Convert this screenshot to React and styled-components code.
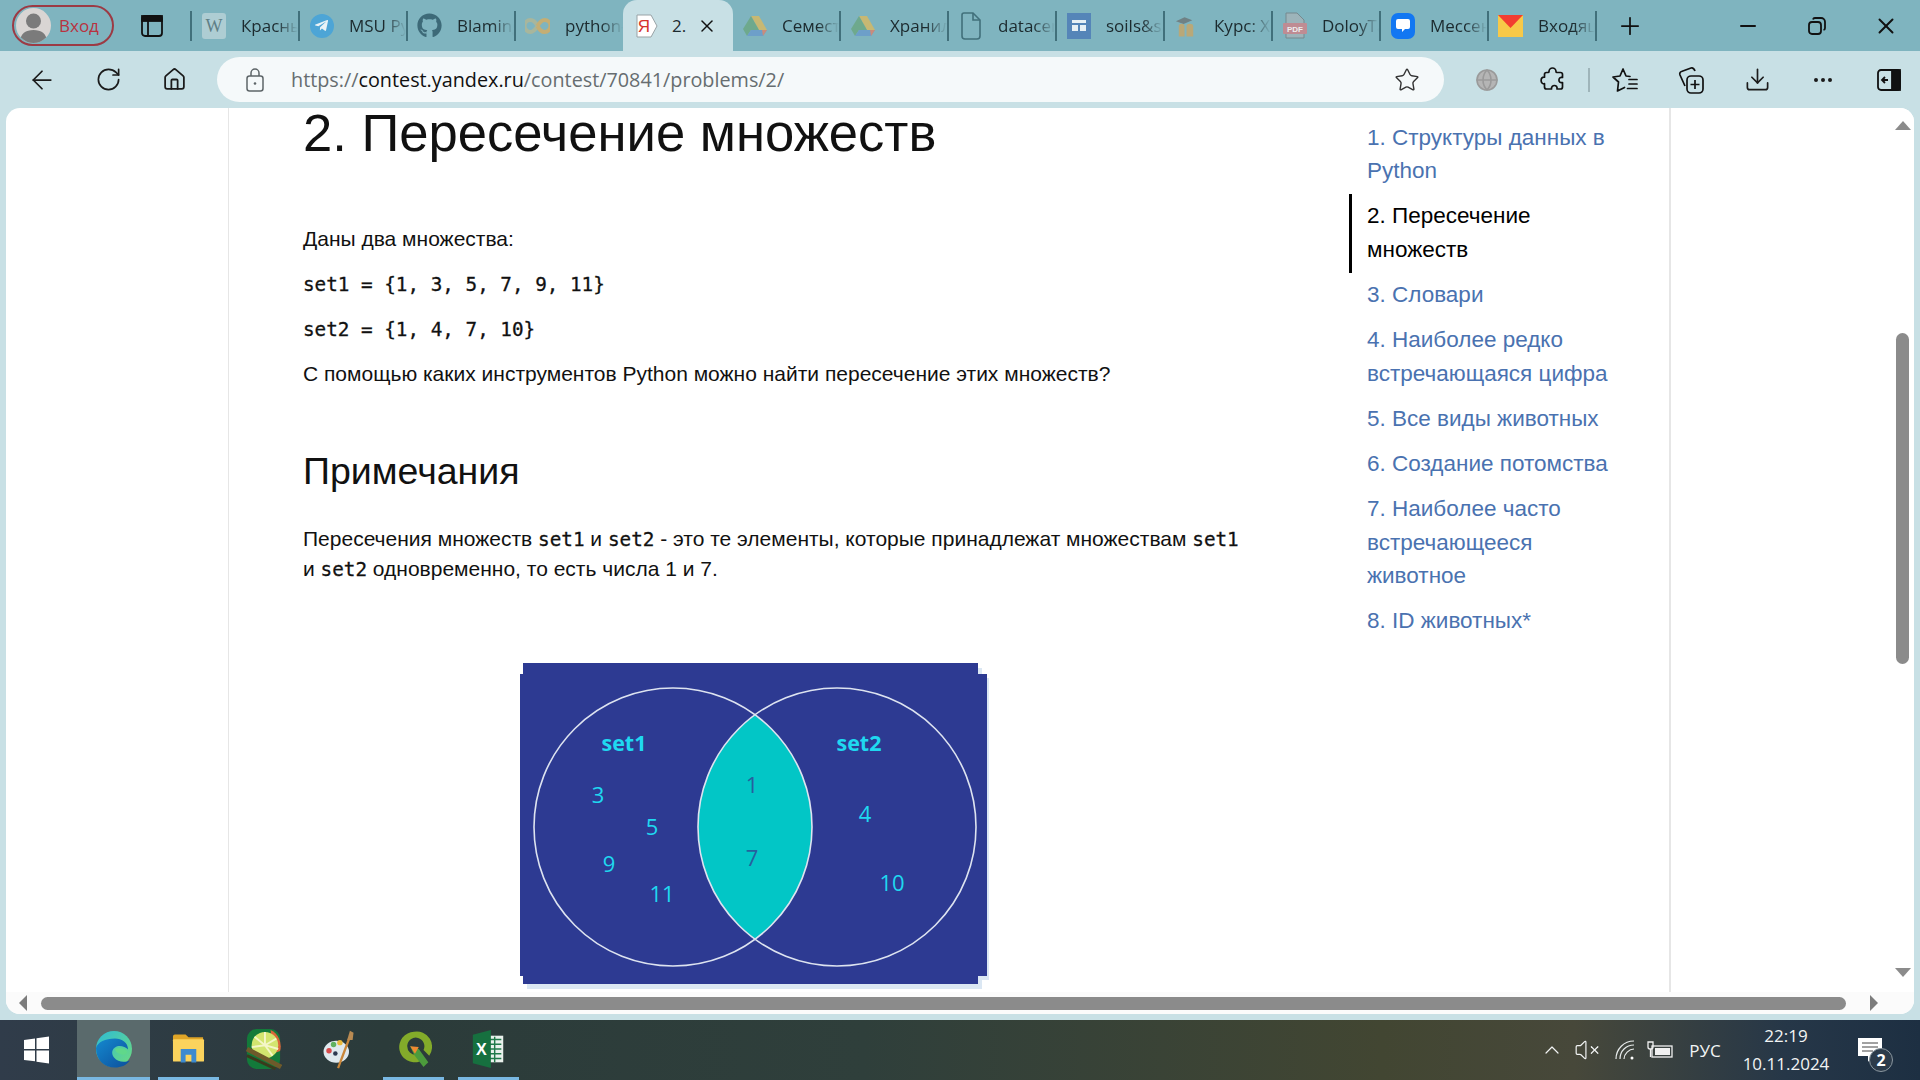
import React from 'react'
import styled, { createGlobalStyle } from 'styled-components'
import { ArrowLeft, RotateCw, Home, Star, Download, MoreHorizontal, Plus, X, Minus, ChevronUp, VolumeX, Globe } from 'lucide-react'
import { FaGithub, FaTelegramPlane } from 'react-icons/fa'

const Global = createGlobalStyle`
  html, body { margin: 0; padding: 0; background: #c8e0e5; }
  body { font-family: "Liberation Sans", Arial, sans-serif; }
  * { box-sizing: border-box; }
`

const Screen = styled.div`
  width: 1920px;
  height: 1080px;
  display: flex;
  flex-direction: column;
  overflow: hidden;
  background: #c8e0e5;
`

/* ---- tab strip ---- */
const TabStrip = styled.div`
  height: 51px;
  flex: none;
  display: flex;
  align-items: center;
  background: #7fb4bf;
  padding-left: 12px;
`
const Profile = styled.div`
  width: 102px;
  height: 41px;
  flex: none;
  display: flex;
  align-items: center;
  gap: 8px;
  padding-left: 2px;
  border: 2px solid #9c3a44;
  border-radius: 21px;
  color: #b8323f;
  font: 17px "Open Sans", sans-serif;
`
const Avatar = styled.div`
  width: 35px;
  height: 35px;
  flex: none;
  border-radius: 50%;
  overflow: hidden;
`
const StripButton = styled.div`
  width: ${p => p.$w}px;
  flex: none;
  display: flex;
  align-items: center;
  justify-content: center;
  color: #111;
`
const Tab = styled.div`
  width: ${p => p.$w || 108}px;
  height: ${p => (p.$active ? 51 : 30)}px;
  flex: none;
  display: flex;
  align-items: center;
  padding-left: ${p => (p.$active ? 11 : 9)}px;
  border-right: ${p => (p.$active || p.$plain ? 'none' : '2px solid #41707b')};
  background: ${p => (p.$active ? '#c8e0e5' : 'transparent')};
  border-radius: ${p => (p.$active ? '14px 14px 0 0' : '0')};
`
const TabIcon = styled.div`
  width: 25px;
  height: 25px;
  flex: none;
  display: flex;
  align-items: center;
  justify-content: center;
`
const TabLabel = styled.span`
  margin-left: ${p => p.$gap || 15}px;
  width: ${p => p.$w || 58}px;
  overflow: hidden;
  white-space: nowrap;
  color: #1c2a2e;
  font: 17px "Open Sans", sans-serif;
  mask-image: ${p => (p.$solid ? 'none' : 'linear-gradient(to right, #000 62%, transparent 100%)')};
`
const FirstSep = styled.div`
  width: 2px;
  height: 30px;
  flex: none;
  background: #41707b;
`
const Spacer = styled.div`
  flex: 1;
`
const WinButton = styled.div`
  width: 69px;
  flex: none;
  display: flex;
  justify-content: center;
  color: #111;
`

/* ---- toolbar ---- */
const Toolbar = styled.div`
  height: 57px;
  flex: none;
  display: flex;
  align-items: center;
  padding-left: 9px;
`
const ToolSlot = styled.div`
  width: 66px;
  height: 45px;
  flex: none;
  display: flex;
  align-items: center;
  justify-content: center;
  color: #1b1b1b;
`
const ToolSep = styled.div`
  width: 6px;
  flex: none;
  display: flex;
  justify-content: center;
  &::before { content: ''; width: 2px; height: 24px; background: #9fb5ba; }
`
const Address = styled.div`
  width: 1227px;
  height: 45px;
  flex: none;
  margin: 0 10px;
  display: flex;
  align-items: center;
  padding: 0 24px 0 29px;
  border-radius: 23px;
  background: #f5f9fa;
  color: #5d6568;
`
const Url = styled.div`
  margin-left: 27px;
  flex: 1;
  font: 19.8px "Open Sans", sans-serif;
  color: #666d70;
  b { font-weight: 400; color: #111; }
`

/* ---- page viewport ---- */
const Viewport = styled.div`
  width: 1908px;
  height: 906px;
  flex: none;
  margin-left: 6px;
  display: grid;
  grid-template-columns: 1fr 21px;
  grid-template-rows: 1fr 22px;
  border-radius: 14px;
  overflow: hidden;
  background: #fff;
`
const SheetArea = styled.div`
  overflow: hidden;
  padding-left: 222px;
`
const Sheet = styled.div`
  width: 1443px;
  height: 100%;
  display: flex;
  border-left: 1px solid #e6e6e6;
  border-right: 2px solid #e6e6e6;
`
const Article = styled.article`
  width: 1120px;
  flex: none;
  padding: 0 100px 0 74px;
  color: #111;
  font-size: 21px;
`
const Title = styled.h1`
  margin: 0 0 66px;
  font-size: 52.6px;
  line-height: 50px;
  font-weight: 400;
  color: #111;
`
const Para = styled.p`
  margin: 0 0 15px;
  line-height: 30px;
`
const Code = styled.code`
  font: 19.3px "DejaVu Sans Mono", monospace;
  -webkit-text-stroke: 0.3px #111;
`
const SubTitle = styled.h2`
  margin: 60px 0 31px;
  font-size: 37.5px;
  line-height: 44px;
  font-weight: 400;
`
const Figure = styled.div`
  margin: 74px 0 0 212px;
`
const NavList = styled.nav`
  width: 275px;
  flex: none;
  padding-top: 7px;
  display: flex;
  flex-direction: column;
`
const NavItem = styled.div`
  padding: 5.6px 0 5.6px 15px;
  font-size: 22.5px;
  line-height: 33.8px;
  color: ${p => (p.$active ? '#000' : '#4a72b0')};
  border-left: 3px solid ${p => (p.$active ? '#000' : 'transparent')};
`

/* ---- scrollbars ---- */
const VTrack = styled.div`
  display: flex;
  flex-direction: column;
  align-items: center;
  padding: 13px 2px 0 0;
  background: #fff;
`
const VThumb = styled.div`
  width: 13px;
  height: 331px;
  margin-top: 203px;
  margin-bottom: 304px;
  border-radius: 7px;
  background: #8b8b8b;
`
const HTrack = styled.div`
  display: flex;
  align-items: center;
  padding-left: 13px;
  background: #fbfbfb;
`
const HThumb = styled.div`
  width: 1805px;
  height: 13px;
  margin: 0 24px 0 14px;
  border-radius: 7px;
  background: #8b8b8b;
`
const Corner = styled.div`
  background: #fbfbfb;
`
const Arrow = styled.div`
  width: 0;
  height: 0;
  flex: none;
  border-style: solid;
  border-color: transparent;
  ${p => p.$dir === 'up' && 'border-width: 0 8px 9px; border-bottom-color: #8b8b8b;'}
  ${p => p.$dir === 'down' && 'border-width: 9px 8px 0; border-top-color: #8b8b8b;'}
  ${p => p.$dir === 'left' && 'border-width: 8px 8px 8px 0; border-right-color: #7c7c7c;'}
  ${p => p.$dir === 'right' && 'border-width: 8px 0 8px 8px; border-left-color: #7c7c7c;'}
`

/* ---- taskbar ---- */
const Taskbar = styled.div`
  height: 60px;
  flex: none;
  margin-top: 6px;
  display: flex;
  align-items: stretch;
  background: linear-gradient(90deg, #303c4a 0%, #2b3b3a 20%, #2f3f3b 45%, #424632 72%, #47483a 82%, #263748 93%, #1d2f42 100%);
  color: #f2f4f4;
`
const StartButton = styled.div`
  width: 77px;
  flex: none;
  display: flex;
  align-items: center;
  justify-content: center;
  padding-right: 5px;
`
const TaskApp = styled.div`
  width: 73px;
  margin-right: 2px;
  flex: none;
  display: flex;
  align-items: center;
  justify-content: center;
  padding-bottom: 2px;
  background: ${p => (p.$active ? '#5a6a6c' : 'transparent')};
  position: relative;
  &::after {
    content: '';
    display: ${p => (p.$open ? 'block' : 'none')};
    position: absolute;
    bottom: 0;
    left: ${p => (p.$active ? 0 : 6)}px;
    right: ${p => (p.$active ? 0 : 6)}px;
    height: 3px;
    background: #79b8e2;
  }
`
const Tray = styled.div`
  display: flex;
  align-items: center;
  padding-right: 22px;
`
const TraySlot = styled.div`
  width: ${p => p.$w}px;
  flex: none;
  display: flex;
  justify-content: center;
  align-items: center;
  font: 17px "Open Sans", sans-serif;
`
const Clock = styled.div`
  width: 112px;
  flex: none;
  text-align: center;
  font: 17px/28px "Open Sans", sans-serif;
`
const Notify = styled.div`
  width: 56px;
  flex: none;
  position: relative;
  display: flex;
  justify-content: center;
`
const Badge = styled.div`
  position: absolute;
  left: 27px;
  top: 11px;
  width: 24px;
  height: 24px;
  border-radius: 50%;
  border: 1px solid #8c98a0;
  background: #2c3b4a;
  color: #fff;
  font: 700 16px/22px "Open Sans", sans-serif;
  text-align: center;
`
const TgRound = styled.div`
  width: 24px;
  height: 24px;
  border-radius: 50%;
  background: #4da5d6;
  display: flex;
  align-items: center;
  justify-content: center;
`

/* ---- small drawings ---- */
const Drive = () => (
  <svg width="24" height="22" viewBox="0 0 24 22">
    <path d="M8 1h8l8 14h-8z" fill="#c7b873" />
    <path d="M8 1l8 14H8l-4 6-4-7z" fill="#6ea98a" opacity=".95" />
    <path d="M4 21l4-6h16l-4 6z" fill="#6d9fc9" />
    <path d="M20 21l4-6h-5z" fill="#c98c7c" />
  </svg>
)
const Wiki = () => (
  <svg width="24" height="26" viewBox="0 0 24 26">
    <rect width="24" height="26" rx="3" fill="#aecdd3" />
    <text x="12" y="19" textAnchor="middle" fontFamily="Liberation Serif" fontSize="18" fill="#5f7f86">W</text>
  </svg>
)
const Yandex = () => (
  <svg width="24" height="26" viewBox="0 0 24 26">
    <path d="M2 2h14l6 11-6 11H2z" fill="#fff" stroke="#99a3a6" />
    <text x="9" y="19" textAnchor="middle" fontFamily="Liberation Sans" fontSize="17" fill="#d6322c">Я</text>
  </svg>
)
const Doc = () => (
  <svg width="20" height="28" viewBox="0 0 20 28" fill="none" stroke="#41707b" strokeWidth="1.6">
    <path d="M3 1h9l7 7v16a3 3 0 0 1-3 3H4a3 3 0 0 1-3-3V3a2 2 0 0 1 2-2z" />
    <path d="M12 1v7h7" />
  </svg>
)
const Sheets = () => (
  <svg width="24" height="26" viewBox="0 0 24 26">
    <rect width="24" height="26" fill="#5585b8" />
    <rect x="5" y="7" width="14" height="3" fill="#e7f0f5" />
    <rect x="5" y="12" width="6" height="6" fill="#e7f0f5" />
    <rect x="13" y="12" width="6" height="6" fill="#e7f0f5" />
  </svg>
)
const Moodle = () => (
  <svg width="26" height="26" viewBox="0 0 26 26">
    <path d="M2 8l9-4 8 3-9 4z" fill="#6f8185" />
    <path d="M5 24V13c0-3 6-3 6 0v11zM13 24V13c0-3 7-3 7 0v11z" fill="#b9a878" />
  </svg>
)
const Pdf = () => (
  <svg width="24" height="28" viewBox="0 0 24 28">
    <path d="M3 1h11l7 7v18H3z" fill="#9db4ba" stroke="#76898e" />
    <rect x="0" y="11" width="24" height="11" rx="1" fill="#bf8c93" />
    <text x="12" y="20" textAnchor="middle" fontFamily="Liberation Sans" fontWeight="700" fontSize="8" fill="#eee">PDF</text>
  </svg>
)
const Messenger = () => (
  <svg width="24" height="26" viewBox="0 0 24 26">
    <rect width="24" height="26" rx="7" fill="#1277f2" />
    <path d="M7 6h10a2 2 0 0 1 2 2v6a2 2 0 0 1-2 2h-3l-3 3v-3H7a2 2 0 0 1-2-2V8a2 2 0 0 1 2-2z" fill="#fff" />
  </svg>
)
const Mail = () => (
  <svg width="25" height="22" viewBox="0 0 25 22">
    <rect width="25" height="22" fill="#f7c948" />
    <path d="M0 0h25L12.500 13z" fill="#f23d30" />
  </svg>
)
const Infinity8 = () => (
  <svg width="25" height="16" viewBox="0 0 25 16" fill="none" strokeWidth="4">
    <path d="M12.500 8C10 3 7 2 5.500 2a6 6 0 0 0 0 12c1.500 0 4-1 7-6" stroke="#a8b69c" />
    <path d="M12.500 8c3-5 5.500-6 7-6a6 6 0 0 1 0 12c-1.500 0-4.500-1-7-6" stroke="#c4ae74" />
  </svg>
)
const TabsIcon = () => (
  <svg width="22" height="22" viewBox="0 0 22 22" fill="none" stroke="#111" strokeWidth="1.8">
    <rect x="1" y="1" width="20" height="20" rx="3" />
    <rect x="1" y="1" width="20" height="5" fill="#111" />
    <path d="M7 6v15" />
  </svg>
)
const Restore = () => (
  <svg width="18" height="18" viewBox="0 0 18 18" fill="none" stroke="#111" strokeWidth="1.8">
    <rect x="1" y="5" width="12" height="12" rx="3" />
    <path d="M5 2.500A2 2 0 0 1 7 1h6a4 4 0 0 1 4 4v6a2 2 0 0 1-1.500 2" />
  </svg>
)
const LockIcon = () => (
  <svg width="18" height="24" viewBox="0 0 18 24" fill="none" stroke="#5d6568" strokeWidth="1.500">
    <rect x="1" y="8" width="16" height="15" rx="2.500" />
    <path d="M5 8V5a4 4 0 0 1 8 0v3" />
    <circle cx="9" cy="15.500" r="1.300" fill="#5d6568" stroke="none" />
  </svg>
)
const PuzzleIcon = () => (
  <svg width="26" height="28" viewBox="0 0 26 28" fill="none" stroke="#111" strokeWidth="1.700" strokeLinejoin="round">
    <path d="M9 5.500a3.500 3.500 0 0 1 7 0c0 .6.500 1 1 1h3.500a2 2 0 0 1 2 2v3c-4.500-1.200-5 6.200 0 5v4.500a2 2 0 0 1-2 2H17c1-4.700-6-4.700-5.500 0H6.500a2 2 0 0 1-2-2v-3.300c-4.500 1-4.500-7.500 0-6.500V8.500a2 2 0 0 1 2-2H8c.5 0 1-.4 1-1z" />
  </svg>
)
const FavList = () => (
  <svg width="26" height="26" viewBox="0 0 26 26" fill="none" stroke="#111" strokeWidth="1.700" strokeLinejoin="round" strokeLinecap="round">
    <path d="M18 9.500L14 9 11 2 8 9l-7 1 5.500 5L5.500 24l7-3.500" />
    <path d="M17 12.500h8M17 17h8M15.500 21.500H25" />
  </svg>
)
const Collections = () => (
  <svg width="26" height="28" viewBox="0 0 26 28" fill="none" stroke="#111" strokeWidth="1.700">
    <path d="M7 20L2 9c-.6-1.500 0-3 1.500-3.500L13 2c2-.6 3 .4 4 3" />
    <rect x="9" y="10" width="16" height="17" rx="4" />
    <path d="M17 14v9M12.500 18.500h9" />
  </svg>
)
const SidePane = () => (
  <svg width="24" height="22" viewBox="0 0 24 22" fill="none" stroke="#111" strokeWidth="1.800">
    <rect x="1" y="1" width="22" height="20" rx="3" />
    <rect x="15" y="1" width="8" height="20" fill="#111" />
    <path d="M11 11H5m3-3l-3 3 3 3" />
  </svg>
)
const WinLogo = () => (
  <svg width="25" height="30" viewBox="0 0 25 30" fill="#fff">
    <path d="M0 5l11-1.600V14H0zM12.500 3.200L25 1.500V14H12.500zM0 15.500h11v10.800L0 25zM12.500 15.500H25v13l-12.500-1.800z" />
  </svg>
)
const Edge = () => (
  <svg width="38" height="38" viewBox="0 2 38 38">
    <defs>
      <linearGradient id="eg1" x1="0" y1="0" x2="1" y2="1">
        <stop offset="0" stopColor="#2dbbd6" />
        <stop offset="1" stopColor="#6fdc7c" />
      </linearGradient>
      <linearGradient id="eg2" x1="0" y1="0" x2="1" y2="1">
        <stop offset="0" stopColor="#1489cf" />
        <stop offset="1" stopColor="#0c4f9c" />
      </linearGradient>
    </defs>
    <circle cx="19" cy="21" r="18" fill="url(#eg1)" />
    <path d="M1 20c0 12 8 19.500 19 19.500 6 0 11-2 15-7-5 2-12 2-16-3-3-4-2-8 1-10 4-3 10-1 13 2 0-7-6-11-13-11C10 10.500 3 14 1 20z" fill="url(#eg2)" />
    <path d="M20 21c3-2 9-1 12 2 1 3-4 5-7 3-3-1-5-3-5-5z" fill="#60d88a" />
  </svg>
)
const Explorer = () => (
  <svg width="33" height="32" viewBox="0 0 34 32">
    <path d="M1 3a2 2 0 0 1 2-2h11l3 3h15v6H1z" fill="#e0a527" />
    <rect x="1" y="6" width="32" height="23" rx="1" fill="#fbd35d" />
    <path d="M9 30V16h16v14h-5v-8h-6v8z" fill="#3c8ad0" />
  </svg>
)
const Lime = () => (
  <svg width="36" height="42" viewBox="0 0 38 44">
    <rect x="1" y="1" width="35" height="42" rx="10" fill="#137a3a" />
    <path d="M26 2a19 19 0 0 1 10 22l-8 3z" fill="#d9673a" />
    <circle cx="20" cy="18" r="14" fill="#d3e56f" />
    <path d="M20 18V4M20 18l12-7M20 18l14 4M20 18l8 11M20 18L9 9M20 18L6 20" stroke="#f4f6c8" strokeWidth="2" />
    <path d="M1 22l36 19" stroke="#6e5a2a" strokeWidth="5" />
    <path d="M1 29l30 14" stroke="#3a3a1c" strokeWidth="3" />
  </svg>
)
const Palette = () => (
  <svg width="36" height="40" viewBox="0 0 36 44">
    <ellipse cx="15" cy="25" rx="14" ry="12" fill="#dfe9ee" />
    <circle cx="7" cy="24" r="3" fill="#d84b4b" />
    <circle cx="12" cy="17" r="3" fill="#5fb15f" />
    <circle cx="19" cy="15" r="3" fill="#e9b93c" />
    <circle cx="14" cy="27" r="2.500" fill="#2c3a50" />
    <path d="M17 43l12-32" stroke="#c9863a" strokeWidth="2.500" />
    <path d="M27 12l3-10 4 2-1 8z" fill="#b98a52" />
  </svg>
)
const Qgis = () => (
  <svg width="36" height="40" viewBox="0 0 36 42">
    <path d="M18 3a16 16 0 1 0 6 31l-3-7a9 9 0 1 1 7-5l6 6A16 16 0 0 0 18 3z" fill="#83ab2a" />
    <path d="M14 18l9 3 10 14-5 5-10-13z" fill="#4c9b3c" />
    <path d="M14 18l9 1-4 7z" fill="#ef8a32" />
  </svg>
)
const Excel = () => (
  <svg width="33" height="38" viewBox="0 0 33 40">
    <rect x="14" y="6" width="18" height="28" fill="#e9f1ec" />
    <path d="M17 10h13M17 15h13M17 20h13M17 25h13M17 30h13M23 7v27" stroke="#207a4a" strokeWidth="1.500" />
    <path d="M0 5l19-5v40L0 35z" fill="#16703f" />
    <text x="9" y="26" textAnchor="middle" fontFamily="Liberation Sans" fontWeight="700" fontSize="17" fill="#fff">X</text>
  </svg>
)
const Wifi = () => (
  <svg width="20" height="20" viewBox="0 0 20 20" fill="none" stroke="#e8ecec" strokeWidth="1.200">
    <path d="M1 19C1 9 9 1 19 1M5 19C5 11 11 5 19 5M9 19c0-5 5-10 10-10" />
    <circle cx="17" cy="18" r="1.500" fill="#fff" stroke="none" />
  </svg>
)
const Battery = () => (
  <svg width="26" height="18" viewBox="0 0 26 18" fill="none" stroke="#f0f0f0" strokeWidth="1.300">
    <rect x="5" y="5" width="20" height="11" />
    <rect x="8" y="7" width="15" height="7" fill="#f0f0f0" stroke="none" />
    <path d="M1 1v5a2 2 0 0 0 2 2h1a2 2 0 0 0 2-2V1zM3.500 8v8" />
  </svg>
)
const NoteIcon = () => (
  <svg width="24" height="26" viewBox="0 0 24 26">
    <path d="M0 1h24v18H14l-4 6v-6H0z" fill="#fff" />
    <path d="M4 6h16M4 10h16M4 14h11" stroke="#444" strokeWidth="1" />
  </svg>
)
const AvatarIcon = () => (
  <svg width="35" height="35" viewBox="0 0 35 35">
    <rect width="35" height="35" fill="#d9d5d3" />
    <circle cx="17.500" cy="13" r="7.500" fill="#7b7b7b" />
    <path d="M4 35c0-10 6-13 13.500-13S31 25 31 35z" fill="#7b7b7b" />
  </svg>
)

// the venn picture from the task statement
const Venn = () => (
  <svg width="480" height="334" viewBox="515 658 480 334" style={{ display: 'block' }}>
    <defs>
      <clipPath id="leftCircle">
        <circle cx="673" cy="827" r="139" />
      </clipPath>
    </defs>
    <path d="M527 668h455v10h7v302h-7v9H527v-9h-3V678h3z" fill="#dbe7f3" />
    <path d="M523 663h455v11h9v302h-9v8H523v-8h-3V674h3z" fill="#2d3a92" />
    <circle cx="837" cy="827" r="139" fill="#02c6c6" clipPath="url(#leftCircle)" />
    <circle cx="673" cy="827" r="139" fill="none" stroke="#dde3f0" strokeWidth="1.600" />
    <circle cx="837" cy="827" r="139" fill="none" stroke="#dde3f0" strokeWidth="1.600" />
    <g fontFamily="Open Sans" fill="#1fd8f0" fontSize="22" textAnchor="middle">
      <text x="624" y="751" fontWeight="700" fontSize="21.500">set1</text>
      <text x="859" y="751" fontWeight="700" fontSize="21.500">set2</text>
      <text x="598" y="803">3</text>
      <text x="652" y="835">5</text>
      <text x="609" y="872">9</text>
      <text x="662" y="902">11</text>
      <text x="865" y="822">4</text>
      <text x="892" y="891">10</text>
      <text x="752" y="793" fill="#26609e">1</text>
      <text x="752" y="866" fill="#26609e">7</text>
    </g>
  </svg>
)

const tabs = [
  { icon: <Wiki />, label: 'Красные книги' },
  { icon: <FaTelegramPlane size={15} color="#eaf3f7" />, round: true, label: 'MSU Python' },
  { icon: <FaGithub size={25} color="#3d6a78" />, label: 'Blaming' },
  { icon: <Infinity8 />, label: 'python-list', w: 107 },
]
const tabsAfter = [
  { icon: <Drive />, label: 'Семестр 1' },
  { icon: <Drive />, label: 'Хранилище' },
  { icon: <Doc />, label: 'datacenter' },
  { icon: <Sheets />, label: 'soils&samples' },
  { icon: <Moodle />, label: 'Курс: Xopt' },
  { icon: <Pdf />, label: 'DoloyTab' },
  { icon: <Messenger />, label: 'Мессенджер' },
  { icon: <Mail />, label: 'Входящие' },
]
const navItems = [
  '1. Структуры данных в Python',
  '2. Пересечение множеств',
  '3. Словари',
  '4. Наиболее редко встречающаяся цифра',
  '5. Все виды животных',
  '6. Создание потомства',
  '7. Наиболее часто встречающееся животное',
  '8. ID животных*',
]

const App = () => (
  <Screen>
    <Global />
    <TabStrip>
      <Profile>
        <Avatar><AvatarIcon /></Avatar>
        Вход
      </Profile>
      <StripButton $w={76}><TabsIcon /></StripButton>
      <FirstSep />
      {tabs.map(t => (
        <Tab key={t.label} $w={t.w} $plain={t.w}>
          <TabIcon>{t.round ? <TgRound>{t.icon}</TgRound> : t.icon}</TabIcon>
          <TabLabel>{t.label}</TabLabel>
        </Tab>
      ))}
      <Tab $active $w={110}>
        <TabIcon><Yandex /></TabIcon>
        <TabLabel $gap={13} $w={25} $solid>2.</TabLabel>
        <X size={20} color="#111" strokeWidth={1.8} />
      </Tab>
      {tabsAfter.map(t => (
        <Tab key={t.label}>
          <TabIcon>{t.icon}</TabIcon>
          <TabLabel>{t.label}</TabLabel>
        </Tab>
      ))}
      <StripButton $w={66}><Plus size={28} strokeWidth={1.5} /></StripButton>
      <Spacer />
      <WinButton><Minus size={24} strokeWidth={2} /></WinButton>
      <WinButton><Restore /></WinButton>
      <WinButton><X size={26} strokeWidth={1.8} /></WinButton>
    </TabStrip>

    <Toolbar>
      <ToolSlot><ArrowLeft size={30} strokeWidth={1.4} /></ToolSlot>
      <ToolSlot><RotateCw size={27} strokeWidth={1.5} /></ToolSlot>
      <ToolSlot><Home size={25} strokeWidth={1.7} /></ToolSlot>
      <Address>
        <LockIcon />
        <Url>https://<b>contest.yandex.ru</b>/contest/70841/problems/2/</Url>
        <Star size={26} strokeWidth={1.3} color="#333" />
      </Address>
      <ToolSlot><Globe size={24} color="#9a9a9a" fill="#b5b5b5" strokeWidth={1.6} /></ToolSlot>
      <ToolSlot><PuzzleIcon /></ToolSlot>
      <ToolSep />
      <ToolSlot><FavList /></ToolSlot>
      <ToolSlot><Collections /></ToolSlot>
      <ToolSlot><Download size={27} strokeWidth={1.5} /></ToolSlot>
      <ToolSlot><MoreHorizontal size={24} strokeWidth={2} /></ToolSlot>
      <ToolSlot><SidePane /></ToolSlot>
    </Toolbar>

    <Viewport>
      <SheetArea>
        <Sheet>
          <Article>
            <Title>2. Пересечение множеств</Title>
            <Para>Даны два множества:</Para>
            <Para><Code>set1 = {'{1, 3, 5, 7, 9, 11}'}</Code></Para>
            <Para><Code>set2 = {'{1, 4, 7, 10}'}</Code></Para>
            <Para>С помощью каких инструментов Python можно найти пересечение этих множеств?</Para>
            <SubTitle>Примечания</SubTitle>
            <Para>
              Пересечения множеств <Code>set1</Code> и <Code>set2</Code> - это те элементы, которые принадлежат множествам <Code>set1</Code> и <Code>set2</Code> одновременно, то есть числа 1 и 7.
            </Para>
            <Figure><Venn /></Figure>
          </Article>
          <NavList>
            {navItems.map((item, i) => (
              <NavItem key={item} $active={i === 1}>{item}</NavItem>
            ))}
          </NavList>
        </Sheet>
      </SheetArea>
      <VTrack>
        <Arrow $dir="up" />
        <VThumb />
        <Arrow $dir="down" />
      </VTrack>
      <HTrack>
        <Arrow $dir="left" />
        <HThumb />
        <Arrow $dir="right" />
      </HTrack>
      <Corner />
    </Viewport>

    <Taskbar>
      <StartButton><WinLogo /></StartButton>
      <TaskApp $active $open><Edge /></TaskApp>
      <TaskApp $open><Explorer /></TaskApp>
      <TaskApp><Lime /></TaskApp>
      <TaskApp><Palette /></TaskApp>
      <TaskApp $open><Qgis /></TaskApp>
      <TaskApp $open><Excel /></TaskApp>
      <Spacer />
      <Tray>
        <TraySlot $w={24}><ChevronUp size={26} strokeWidth={1.2} /></TraySlot>
        <TraySlot $w={46}><VolumeX size={26} strokeWidth={1.1} /></TraySlot>
        <TraySlot $w={30}><Wifi /></TraySlot>
        <TraySlot $w={40}><Battery /></TraySlot>
        <TraySlot $w={50}>РУС</TraySlot>
        <Clock>22:19<br />10.11.2024</Clock>
        <Notify>
          <NoteIcon />
          <Badge>2</Badge>
        </Notify>
      </Tray>
    </Taskbar>
  </Screen>
)

export default App
